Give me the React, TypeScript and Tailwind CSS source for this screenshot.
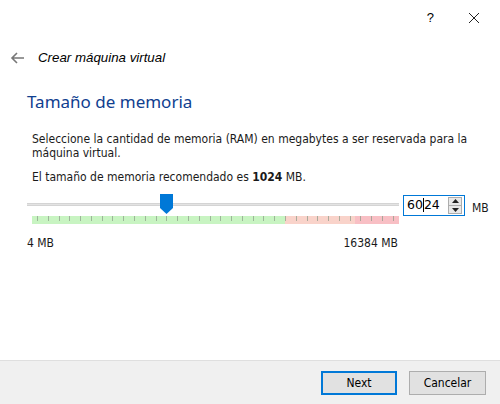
import React from "react";

const ticks = Array.from({ length: 34 }, (_, i) => i);

const App = () => {
  return (
    <div className="w-[500px] h-[404px] bg-white flex flex-col overflow-hidden font-['DejaVu_Sans_Condensed',sans-serif] text-[12px] text-[#1a1a1a]">
      {/* title bar */}
      <div className="h-[34px] flex justify-end items-center pr-[20px] gap-[34px] text-black">
        <span className="font-['Liberation_Sans',sans-serif] text-[13px] mt-[2px]">?</span>
        <svg width="12" height="12" viewBox="0 0 12 12" className="mt-[1px]">
          <path d="M1 1 L11 11 M11 1 L1 11" stroke="#222" strokeWidth="1" />
        </svg>
      </div>

      {/* wizard header */}
      <div className="h-[48px] flex items-center pl-[10px]">
        <svg width="15" height="12" viewBox="0 0 15 12">
          <path d="M14 6 H2 M7 1 L2 6 L7 11" stroke="#777" strokeWidth="1.6" fill="none" />
        </svg>
        <span className="ml-[13px] font-['Liberation_Sans',sans-serif] italic text-[13.3px] text-black">
          Crear máquina virtual
        </span>
      </div>

      {/* page */}
      <div className="flex-1 flex flex-col pl-[27px] pr-[20px]">
        <h1 className="font-['Noto_Sans',sans-serif] text-[17px] leading-[22px] text-[#10408f] mt-[9px]">
          Tamaño de memoria
        </h1>
        <div className="pl-[5px] mt-[19px] leading-[14px] whitespace-nowrap">
          Seleccione la cantidad de memoria (RAM) en megabytes a ser reservada para la
          <br />
          máquina virtual.
        </div>
        <div className="pl-[5px] mt-[10px] leading-[14px]">
          El tamaño de memoria recomendado es <b>1024</b> MB.
        </div>

        <div className="flex mt-[9px]">
          <div className="w-[380px] flex flex-col">
            {/* slider */}
            <div className="relative h-[23px] flex items-center">
              <div className="w-full h-[3px] bg-[#e3e3e3] border-y border-[#d4d4d4]" />
              <div className="absolute left-[133px] top-[1px] w-[13px] h-[20px]">
                <svg width="13" height="20" viewBox="0 0 13 20">
                  <path d="M0 0 H13 V14 L6.5 20 L0 14 Z" fill="#0078d7" />
                </svg>
              </div>
            </div>
            {/* ticks */}
            <div className="relative ml-[5px] w-[367px] h-[8px] flex">
              <div className="w-[253px] h-full bg-[#c8f4c2]" />
              <div className="w-[70px] h-full bg-[#f9d3ca]" />
              <div className="flex-1 h-full bg-[#f8bfc4]" />
              <div className="absolute inset-0 flex justify-between px-[5px]">
                {ticks.map((t) => (
                  <span key={t} className="w-px h-[5px] bg-[#8a9a88] opacity-70" />
                ))}
              </div>
            </div>
            <div className="flex justify-between mt-[10px] pr-[1px]">
              <span>4 MB</span>
              <span>16384 MB</span>
            </div>
          </div>

          {/* spinbox */}
          <div className="ml-[4px] mt-[2px] flex items-start">
            <div className="w-[62px] h-[21px] border border-[#0078d7] flex items-center bg-white">
              <span className="ml-[3px] flex-1 font-['DejaVu_Sans',sans-serif] text-[12.5px] text-black">
                60<span className="inline-block w-px h-[14px] bg-black align-middle -mt-[2px]" />24
              </span>
              <div className="w-[14px] h-[17px] mr-[2px] border border-[#adadad] bg-[#e9e9e9] flex flex-col items-center justify-center gap-[2px]">
                <svg width="7" height="4" viewBox="0 0 7 4"><path d="M0 4 L3.5 0 L7 4 Z" fill="#222" /></svg>
                <div className="w-full h-px bg-[#adadad]" />
                <svg width="7" height="4" viewBox="0 0 7 4"><path d="M0 0 L3.5 4 L7 0 Z" fill="#222" /></svg>
              </div>
            </div>
            <span className="ml-[7px] mt-[4px]">MB</span>
          </div>
        </div>
      </div>

      {/* footer */}
      <div className="h-[44px] bg-[#f0f0f0] border-t border-[#dfdfdf] flex items-center justify-end pr-[14px] gap-[12px]">
        <button className="w-[76px] h-[24px] border-2 border-[#0078d7] bg-[#e1e1e1] text-[12px] text-black">
          Next
        </button>
        <button className="w-[77px] h-[24px] border border-[#adadad] bg-[#e1e1e1] text-[12px] text-black">
          Cancelar
        </button>
      </div>
    </div>
  );
};

export default App;
